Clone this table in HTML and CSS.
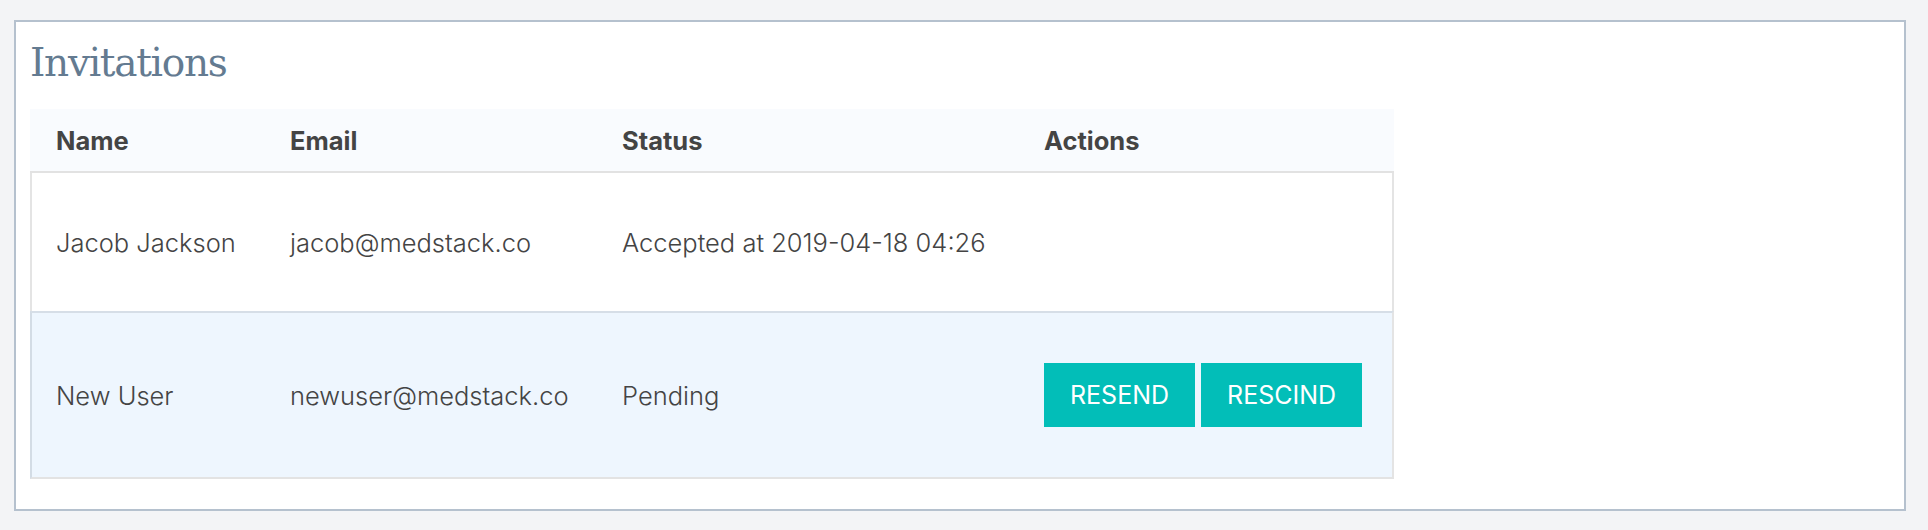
FILE: index.html
```html
<!DOCTYPE html>
<html lang="en">
<head>
<meta charset="utf-8">
<title>Invitations</title>
<link rel="stylesheet" href="styles.css">
</head>
<body>
<section class="card">
  <h1 class="title">Invitations</h1>
  <div class="table">
    <div class="row head">
      <div class="cell">Name</div>
      <div class="cell">Email</div>
      <div class="cell">Status</div>
      <div class="cell">Actions</div>
    </div>
    <div class="row body">
      <div class="cell">Jacob Jackson</div>
      <div class="cell">jacob@medstack.co</div>
      <div class="cell">Accepted at 2019-04-18 04:26</div>
      <div class="cell"></div>
    </div>
    <div class="row body active">
      <div class="cell">New User</div>
      <div class="cell">newuser@medstack.co</div>
      <div class="cell">Pending</div>
      <div class="cell actions">
        <button class="btn">RESEND</button>
        <button class="btn">RESCIND</button>
      </div>
    </div>
  </div>
</section>
</body>
</html>
```

FILE: styles.css
```css
html, body {
  margin: 0;
  background: #f3f4f6;
}
body {
  padding: 20px 22px 18px 14px;
  font-family: "Inter", "Noto Sans", sans-serif;
  color: #454545;
}
.card {
  background: #ffffff;
  border: 2px solid #b5c1ce;
  padding: 21px 14px 30px 14px;
}
.title {
  margin: 0;
  font-family: "DejaVu Serif", "Liberation Serif", serif;
  font-weight: normal;
  font-size: 39px;
  line-height: 40px;
  letter-spacing: -1.3px;
  color: #647b91;
}
.table {
  margin-top: 26px;
  width: 1364px;
}
.row {
  display: grid;
  grid-template-columns: 234px 332px 422px 1fr;
  align-items: center;
  font-size: 25.5px;
}
.cell {
  padding-left: 26px;
  white-space: nowrap;
}
.head {
  height: 62px;
  background: #f9fbfe;
  border-bottom: 2px solid #e2e2e2;
  font-weight: 700;
  color: #444444;
}
.body {
  grid-template-columns: 232px 332px 422px 1fr;
  height: 138px;
  border-left: 2px solid #e4e4e4;
  border-right: 2px solid #e4e4e4;
  font-weight: 300;
  color: #444444;
}
.body .cell:first-child {
  padding-left: 24px;
}
.body.active {
  height: 164px;
  background: #eef6fe;
  border-top: 2px solid #d6dee7;
  border-left-color: #d3dce5;
  border-bottom: 2px solid #e3e3e3;
}
.actions {
  display: flex;
  gap: 6px;
}
.btn {
  height: 64px;
  padding: 0 26px;
  border: 0;
  border-radius: 0;
  background: #02beb8;
  color: #ffffff;
  font-family: "Inter", "Noto Sans", sans-serif;
  font-size: 25px;
  font-weight: 400;
}
```
